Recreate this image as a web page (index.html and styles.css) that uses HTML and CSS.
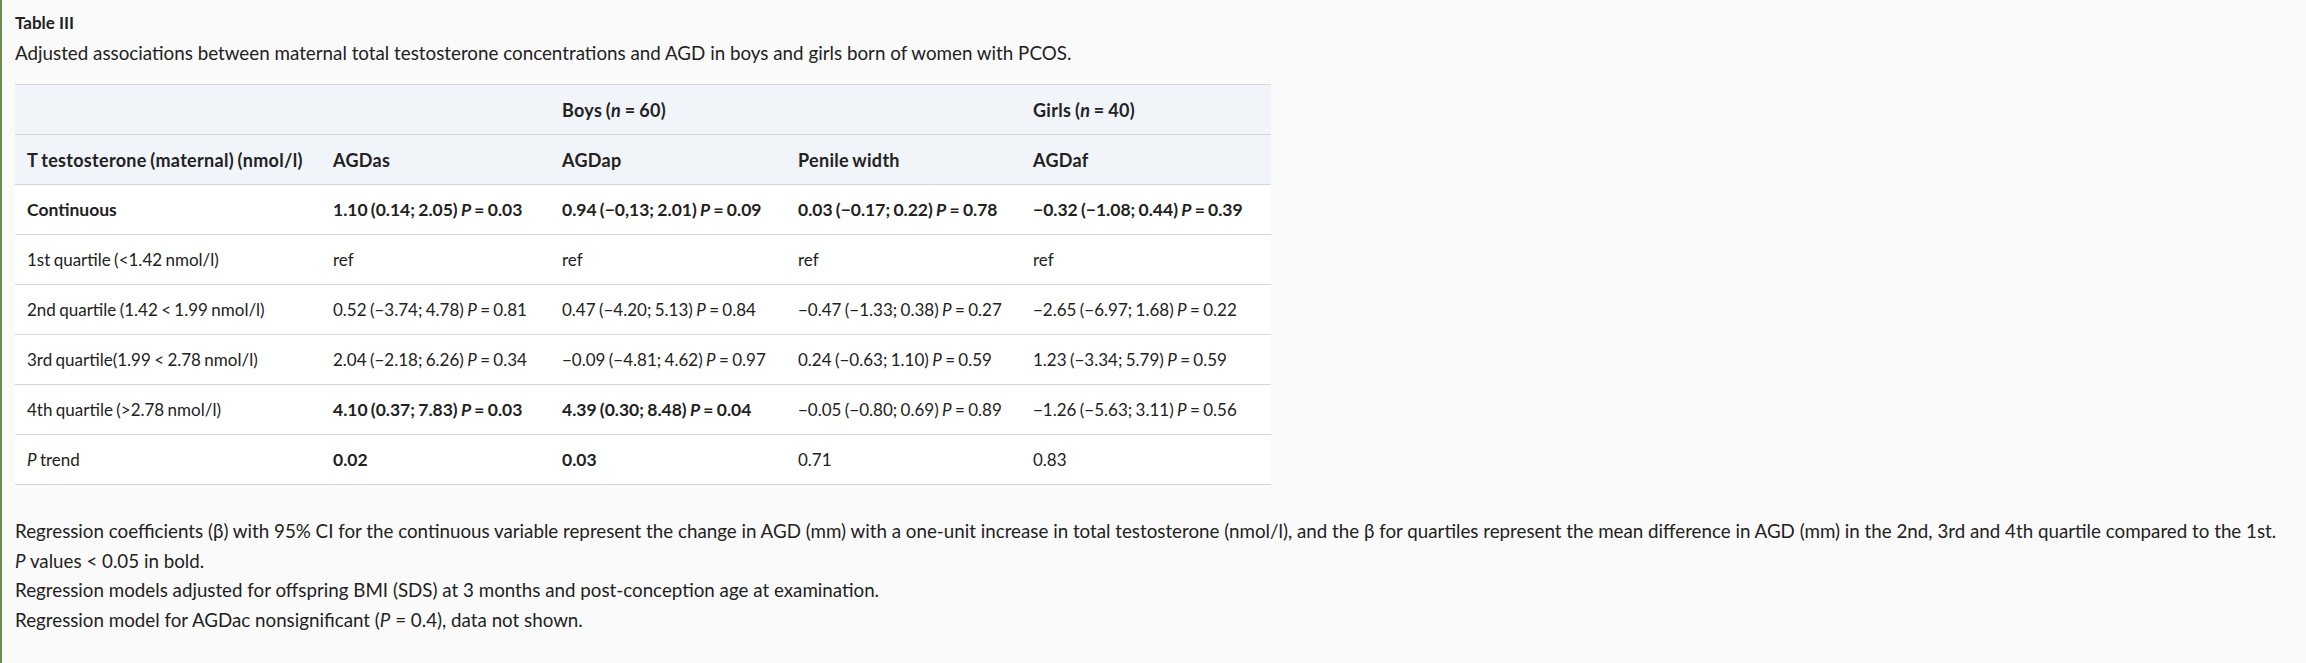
FILE: index.html
```html
<!DOCTYPE html>
<html lang="en">
<head>
<meta charset="utf-8">
<title>Table III</title>
<link rel="stylesheet" href="styles.css">
</head>
<body>
<div class="panel">
  <div class="table-title">Table III</div>
  <div class="table-caption">Adjusted associations between maternal total testosterone concentrations and AGD in boys and girls born of women with PCOS.</div>
  <table class="data">
    <colgroup>
      <col class="c1"><col class="c2"><col class="c3"><col class="c4"><col class="c5">
    </colgroup>
    <thead>
      <tr>
        <th></th><th></th><th>Boys (<i>n</i> = 60)</th><th></th><th>Girls (<i>n</i> = 40)</th>
      </tr>
      <tr>
        <th>T testosterone (maternal) (nmol/l)</th><th>AGDas</th><th>AGDap</th><th>Penile width</th><th>AGDaf</th>
      </tr>
    </thead>
    <tbody>
      <tr class="bold">
        <td>Continuous</td>
        <td>1.10 (0.14; 2.05) <i>P</i> = 0.03</td>
        <td>0.94 (−0,13; 2.01) <i>P</i> = 0.09</td>
        <td>0.03 (−0.17; 0.22) <i>P</i> = 0.78</td>
        <td>−0.32 (−1.08; 0.44) <i>P</i> = 0.39</td>
      </tr>
      <tr>
        <td>1st quartile (&lt;1.42 nmol/l)</td><td>ref</td><td>ref</td><td>ref</td><td>ref</td>
      </tr>
      <tr>
        <td>2nd quartile (1.42 &lt; 1.99 nmol/l)</td>
        <td>0.52 (−3.74; 4.78) <i>P</i> = 0.81</td>
        <td>0.47 (−4.20; 5.13) <i>P</i> = 0.84</td>
        <td>−0.47 (−1.33; 0.38) <i>P</i> = 0.27</td>
        <td>−2.65 (−6.97; 1.68) <i>P</i> = 0.22</td>
      </tr>
      <tr>
        <td>3rd quartile(1.99 &lt; 2.78 nmol/l)</td>
        <td>2.04 (−2.18; 6.26) <i>P</i> = 0.34</td>
        <td>−0.09 (−4.81; 4.62) <i>P</i> = 0.97</td>
        <td>0.24 (−0.63; 1.10) <i>P</i> = 0.59</td>
        <td>1.23 (−3.34; 5.79) <i>P</i> = 0.59</td>
      </tr>
      <tr>
        <td>4th quartile (&gt;2.78 nmol/l)</td>
        <td><b>4.10 (0.37; 7.83) <i>P</i> = 0.03</b></td>
        <td><b>4.39 (0.30; 8.48) <i>P</i> = 0.04</b></td>
        <td>−0.05 (−0.80; 0.69) <i>P</i> = 0.89</td>
        <td>−1.26 (−5.63; 3.11) <i>P</i> = 0.56</td>
      </tr>
      <tr>
        <td><i>P</i> trend</td>
        <td><b>0.02</b></td>
        <td><b>0.03</b></td>
        <td>0.71</td>
        <td>0.83</td>
      </tr>
    </tbody>
  </table>
  <div class="notes">
    <p>Regression coefficients (β) with 95% CI for the continuous variable represent the change in AGD (mm) with a one-unit increase in total testosterone (nmol/l), and the β for quartiles represent the mean difference in AGD (mm) in the 2nd, 3rd and 4th quartile compared to the 1st.</p>
    <p><i>P</i> values &lt; 0.05 in bold.</p>
    <p>Regression models adjusted for offspring BMI (SDS) at 3 months and post-conception age at examination.</p>
    <p>Regression model for AGDac nonsignificant (<i>P</i> = 0.4), data not shown.</p>
  </div>
</div>
</body>
</html>
```

FILE: styles.css
```css
html, body {
  margin: 0;
  padding: 0;
  background: #fafafa;
}
body {
  font-family: Lato, "Liberation Sans", sans-serif;
  color: #222;
  width: 2306px;
  height: 663px;
  overflow: hidden;
}
.panel {
  border-left: 2px solid #6b8c4d;
  padding: 11px 0 0 13px;
  height: 663px;
  box-sizing: border-box;
}
.table-title {
  font-weight: 700;
  font-size: 17px;
  line-height: 24px;
}
.table-caption {
  font-size: 18.8px;
  line-height: 24px;
  margin-top: 6px;
}
.data {
  border-collapse: collapse;
  table-layout: fixed;
  margin-top: 19px;
  width: 1256px;
  font-size: 17px;
  word-spacing: -1px;
  background: #fff;
}
.data col.c1 { width: 306px; }
.data col.c2 { width: 229px; }
.data col.c3 { width: 236px; }
.data col.c4 { width: 235px; }
.data col.c5 { width: 250px; }
.data th, .data td {
  text-align: left;
  padding: 0 12px;
  height: 49px;
  border-top: 1px solid #d3d6e2;
  border-bottom: 1px solid #d3d6e2;
  white-space: nowrap;
  vertical-align: middle;
}
.data thead th {
  background: #f1f4f9;
  font-weight: 700;
  font-size: 18px;
  letter-spacing: 0.3px;
}
.data tr.bold td,
.data td b {
  font-weight: 700;
  font-size: 17.5px;
}
.notes {
  margin-top: 35px;
  font-size: 18.75px;
  line-height: 22px;
  white-space: nowrap;
}
.notes p {
  margin: 0 0 7.5px 0;
}
```
